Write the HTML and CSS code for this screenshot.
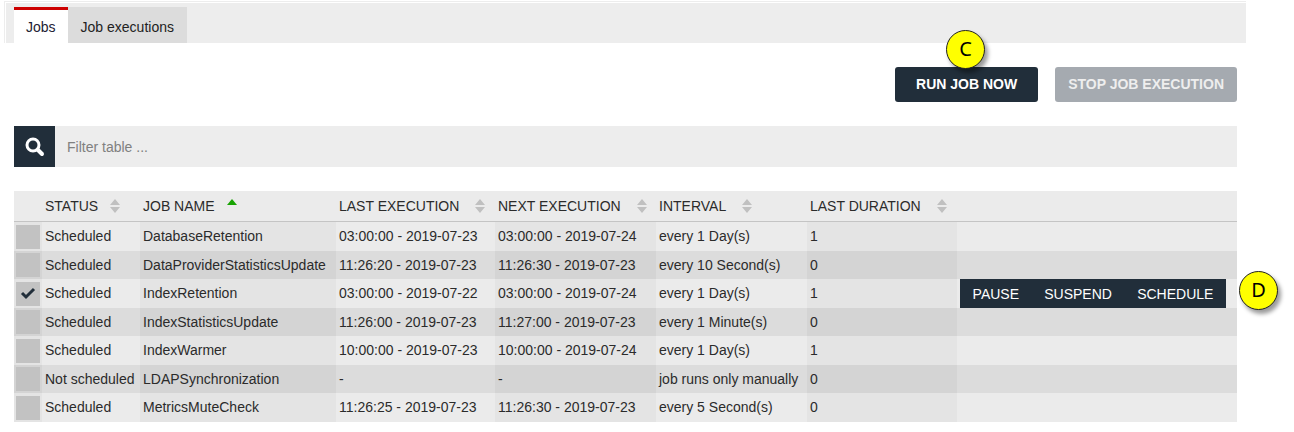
FILE: index.html
```html
<!DOCTYPE html>
<html lang="en">
<head>
    <meta charset="UTF-8">
    <meta name="viewport" content="width=device-width, initial-scale=1.0">
    <title>Jobs</title>
    <link rel="stylesheet" href="styles.css">
</head>
<body>
    <!-- shared icons -->
    <svg class="icon-defs" aria-hidden="true">
        <symbol id="icon-sort" viewBox="0 0 10 14">
            <path d="M5 0 L10 6 H0 Z M0 8 H10 L5 14 Z"/>
        </symbol>
        <symbol id="icon-sort-up" viewBox="0 0 10 14">
            <path d="M5 0 L10 6 H0 Z"/>
        </symbol>
        <symbol id="icon-check" viewBox="0 0 16 16">
            <path d="M2 7 L6 11 L14 3" fill="none" stroke="#212e3a" stroke-width="3"/>
        </symbol>
    </svg>

    <div class="page">
        <nav class="tabs">
            <a class="tab active" href="#jobs">Jobs</a>
            <a class="tab" href="#executions">Job executions</a>
        </nav>

        <main class="content">
            <div class="toolbar">
                <div class="callout-anchor">
                    <button type="button" class="btn">RUN JOB NOW</button>
                    <span class="callout callout-run">C</span>
                </div>
                <button type="button" class="btn btn-stop" disabled>STOP JOB EXECUTION</button>
            </div>

            <form class="filter">
                <button type="submit" class="filter-btn" aria-label="Search">
                    <svg class="search-icon" viewBox="0 0 20 20"><circle cx="8" cy="8" r="6" fill="none" stroke="#fff" stroke-width="3"/><path d="M13 13 L17 17" stroke="#fff" stroke-width="4" stroke-linecap="round"/></svg>
                </button>
                <input type="text" class="filter-input" placeholder="Filter table ..." aria-label="Filter table">
            </form>

            <table class="jobs-table">
                <colgroup>
                    <col class="col-check">
                    <col class="col-status">
                    <col class="col-name">
                    <col class="col-last">
                    <col class="col-next">
                    <col class="col-interval">
                    <col class="col-duration">
                    <col>
                </colgroup>
                <thead>
                    <tr>
                        <th></th>
                        <th><span class="head">STATUS <svg class="sort"><use href="#icon-sort"/></svg></span></th>
                        <th><span class="head">JOB NAME <svg class="sort sorted"><use href="#icon-sort-up"/></svg></span></th>
                        <th><span class="head head-wide">LAST EXECUTION <svg class="sort"><use href="#icon-sort"/></svg></span></th>
                        <th><span class="head head-wide">NEXT EXECUTION <svg class="sort"><use href="#icon-sort"/></svg></span></th>
                        <th><span class="head head-wide">INTERVAL <svg class="sort"><use href="#icon-sort"/></svg></span></th>
                        <th><span class="head head-wide">LAST DURATION <svg class="sort"><use href="#icon-sort"/></svg></span></th>
                        <th></th>
                    </tr>
                </thead>
                <tbody>
                    <tr>
                        <td><label class="check"><input type="checkbox" aria-label="DatabaseRetention"><svg><use href="#icon-check"/></svg></label></td>
                        <td>Scheduled</td>
                        <td>DatabaseRetention</td>
                        <td>03:00:00 - 2019-07-23</td>
                        <td>03:00:00 - 2019-07-24</td>
                        <td>every 1 Day(s)</td>
                        <td>1</td>
                        <td></td>
                    </tr>
                    <tr>
                        <td><label class="check"><input type="checkbox" aria-label="DataProviderStatisticsUpdate"><svg><use href="#icon-check"/></svg></label></td>
                        <td>Scheduled</td>
                        <td>DataProviderStatisticsUpdate</td>
                        <td>11:26:20 - 2019-07-23</td>
                        <td>11:26:30 - 2019-07-23</td>
                        <td>every 10 Second(s)</td>
                        <td>0</td>
                        <td></td>
                    </tr>
                    <tr>
                        <td><label class="check"><input type="checkbox" aria-label="IndexRetention" checked><svg><use href="#icon-check"/></svg></label></td>
                        <td>Scheduled</td>
                        <td>IndexRetention</td>
                        <td>03:00:00 - 2019-07-22</td>
                        <td>03:00:00 - 2019-07-24</td>
                        <td>every 1 Day(s)</td>
                        <td>1</td>
                        <td class="actions-cell">
                            <div class="actions">
                                <button type="button">PAUSE</button>
                                <button type="button">SUSPEND</button>
                                <button type="button">SCHEDULE</button>
                            </div>
                            <span class="callout callout-actions">D</span>
                        </td>
                    </tr>
                    <tr>
                        <td><label class="check"><input type="checkbox" aria-label="IndexStatisticsUpdate"><svg><use href="#icon-check"/></svg></label></td>
                        <td>Scheduled</td>
                        <td>IndexStatisticsUpdate</td>
                        <td>11:26:00 - 2019-07-23</td>
                        <td>11:27:00 - 2019-07-23</td>
                        <td>every 1 Minute(s)</td>
                        <td>0</td>
                        <td></td>
                    </tr>
                    <tr>
                        <td><label class="check"><input type="checkbox" aria-label="IndexWarmer"><svg><use href="#icon-check"/></svg></label></td>
                        <td>Scheduled</td>
                        <td>IndexWarmer</td>
                        <td>10:00:00 - 2019-07-23</td>
                        <td>10:00:00 - 2019-07-24</td>
                        <td>every 1 Day(s)</td>
                        <td>1</td>
                        <td></td>
                    </tr>
                    <tr>
                        <td><label class="check"><input type="checkbox" aria-label="LDAPSynchronization"><svg><use href="#icon-check"/></svg></label></td>
                        <td>Not scheduled</td>
                        <td>LDAPSynchronization</td>
                        <td>-</td>
                        <td>-</td>
                        <td>job runs only manually</td>
                        <td>0</td>
                        <td></td>
                    </tr>
                    <tr>
                        <td><label class="check"><input type="checkbox" aria-label="MetricsMuteCheck"><svg><use href="#icon-check"/></svg></label></td>
                        <td>Scheduled</td>
                        <td>MetricsMuteCheck</td>
                        <td>11:26:25 - 2019-07-23</td>
                        <td>11:26:30 - 2019-07-23</td>
                        <td>every 5 Second(s)</td>
                        <td>0</td>
                        <td></td>
                    </tr>
                </tbody>
            </table>
        </main>
    </div>
</body>
</html>
```

FILE: styles.css
```css
* {
    box-sizing: border-box;
}

body {
    margin: 0;
    background: #fff;
    font-family: "Liberation Sans", Arial, sans-serif;
    font-size: 14px;
    color: #2b2b2b;
}

button, input {
    font: inherit;
}

.icon-defs {
    display: none;
}

.page {
    padding: 1px 48px 0 4px;
}

/* Tabs */
.tabs {
    display: flex;
    height: 42px;
    padding: 5px 9px 0;
    border-top: 1px solid #ededed;
    border-left: 1px solid #ededed;
    background: linear-gradient(#fff 1px, transparent 1px),
                linear-gradient(to right, #fff 1px, #ededed 1px);
}

.tab {
    padding: 3px 13px 0;
    line-height: 34px;
    background: #dcdcdc;
    color: #222;
    text-decoration: none;
}

.tab.active {
    padding: 0 12px;
    border-top: 3px solid #cc0000;
    background: #fff;
    color: #223;
}

.content {
    padding: 24px 9px 0 10px;
}

/* Buttons */
.toolbar {
    display: flex;
    justify-content: flex-end;
    gap: 17px;
    margin-bottom: 24px;
}

.callout-anchor {
    position: relative;
}

.btn {
    display: block;
    min-width: 143px;
    height: 35px;
    padding: 0 13px 2px;
    border: none;
    border-radius: 3px;
    background: #212e3a;
    color: #fff;
    font-weight: bold;
    cursor: pointer;
}

.btn-stop {
    background: #a5aab0;
    color: #eee;
    cursor: default;
}

/* Filter */
.filter {
    display: flex;
    height: 41px;
    margin-bottom: 24px;
    background: #ededed;
}

.filter-btn {
    display: flex;
    align-items: center;
    justify-content: center;
    width: 41px;
    padding: 0;
    border: none;
    background: #212e3a;
}

.search-icon {
    width: 20px;
    height: 20px;
}

.filter-input {
    flex: 1;
    padding: 0 12px;
    border: none;
    background: transparent;
    color: #333;
}

.filter-input::placeholder {
    color: #808080;
}

/* Table */
.jobs-table {
    width: 100%;
    table-layout: fixed;
    border-collapse: separate;
    border-spacing: 0;
}

.col-check { width: 28px; }
.col-status { width: 98px; }
.col-name { width: 196px; }
.col-last { width: 159px; }
.col-next { width: 161px; }
.col-interval { width: 151px; }
.col-duration { width: 150px; }

.jobs-table th {
    height: 31px;
    padding: 0 3px;
    border-bottom: 1px solid #c4c4c4;
    background: #ebebeb;
    font-weight: normal;
    text-align: left;
}

.jobs-table td {
    height: 29px;
    padding: 0 3px 2px;
    background: #ebebeb;
    white-space: nowrap;
}

.jobs-table td:nth-child(odd) {
    background: #e4e4e4;
}

.jobs-table tr:nth-child(even) td {
    height: 28px;
    padding-bottom: 0;
    background: #dcdcdc;
}

.jobs-table tr:nth-child(even) td:nth-child(odd) {
    background: #d4d4d4;
}

.jobs-table tbody td:first-child {
    padding: 0 2px;
}

.head {
    display: flex;
    align-items: center;
    gap: 12px;
}

.head-wide {
    gap: 16px;
}

.sort {
    width: 10px;
    height: 14px;
    fill: #c0c0c0;
}

.sorted {
    fill: #18a303;
}

/* Row selection */
.check {
    display: grid;
    place-items: center;
    height: 24px;
}

.check input, .check svg {
    grid-area: 1 / 1;
}

.check input {
    appearance: none;
    width: 24px;
    height: 24px;
    margin: 0;
    background: #c2c2c2;
}

.check svg {
    width: 16px;
    height: 16px;
    visibility: hidden;
    pointer-events: none;
}

.check input:checked + svg {
    visibility: visible;
}

/* Row actions */
.jobs-table .actions-cell {
    position: relative;
    padding: 0 11px 0 3px;
}

.actions {
    display: flex;
    height: 29px;
    background: #212e3a;
}

.actions button {
    flex: auto;
    padding: 0 11px;
    border: none;
    background: none;
    color: #fff;
    cursor: pointer;
}

/* Lettered callouts */
.callout {
    position: absolute;
    display: flex;
    align-items: center;
    justify-content: center;
    width: 39px;
    height: 39px;
    padding-bottom: 2px;
    border: 1px solid #222;
    border-radius: 50%;
    background: #ffff00;
    box-shadow: 3px 4px 4px rgba(0, 0, 0, 0.4);
    font-family: "Noto Sans", sans-serif;
    font-size: 20px;
    line-height: 20px;
    color: #000;
}

.callout-run {
    top: -37px;
    left: 51px;
}

.callout-actions {
    top: -8px;
    right: -41px;
}
```
